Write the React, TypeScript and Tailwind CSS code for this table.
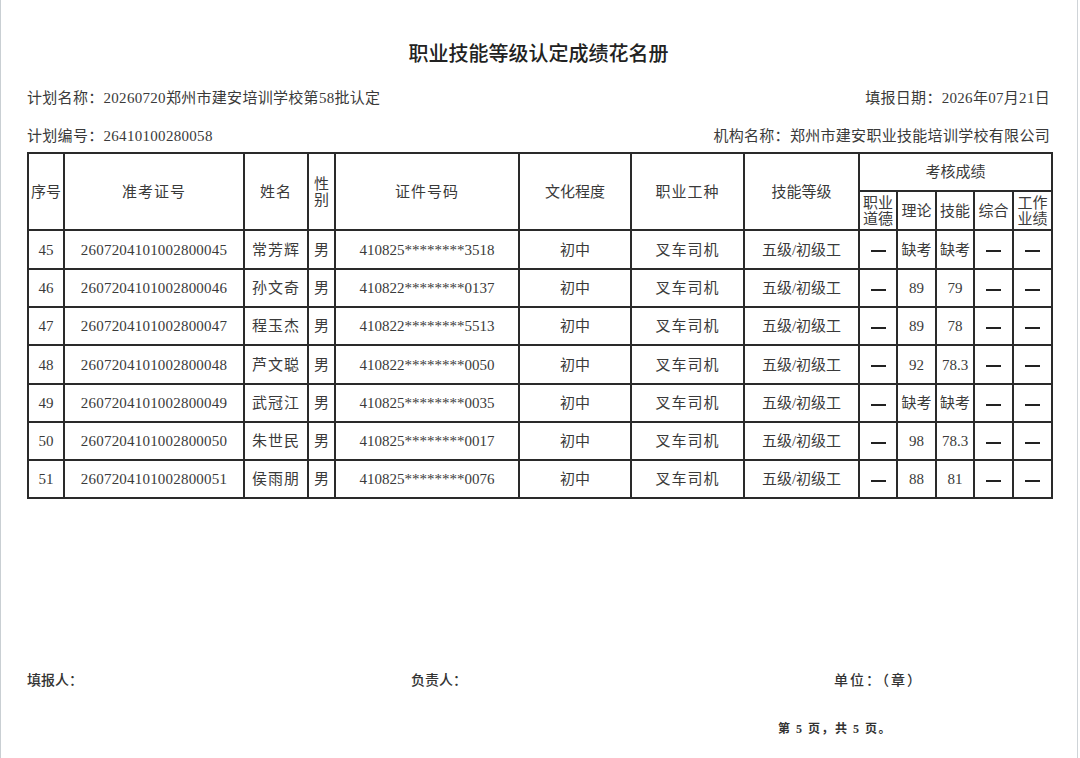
import React from 'react';

type Row = {
  no: string;
  ticket: string;
  name: string;
  sex: string;
  idNo: string;
  edu: string;
  job: string;
  level: string;
  theory: string;
  skill: string;
  h: string;
};

const rows: Row[] = [
  { no: '45', ticket: '2607204101002800045', name: '常芳辉', sex: '男', idNo: '410825********3518', edu: '初中', job: '叉车司机', level: '五级/初级工', theory: '缺考', skill: '缺考', h: 'h-[39px]' },
  { no: '46', ticket: '2607204101002800046', name: '孙文奇', sex: '男', idNo: '410822********0137', edu: '初中', job: '叉车司机', level: '五级/初级工', theory: '89', skill: '79', h: 'h-[38px]' },
  { no: '47', ticket: '2607204101002800047', name: '程玉杰', sex: '男', idNo: '410822********5513', edu: '初中', job: '叉车司机', level: '五级/初级工', theory: '89', skill: '78', h: 'h-[38px]' },
  { no: '48', ticket: '2607204101002800048', name: '芦文聪', sex: '男', idNo: '410822********0050', edu: '初中', job: '叉车司机', level: '五级/初级工', theory: '92', skill: '78.3', h: 'h-[39px]' },
  { no: '49', ticket: '2607204101002800049', name: '武冠江', sex: '男', idNo: '410825********0035', edu: '初中', job: '叉车司机', level: '五级/初级工', theory: '缺考', skill: '缺考', h: 'h-[38px]' },
  { no: '50', ticket: '2607204101002800050', name: '朱世民', sex: '男', idNo: '410825********0017', edu: '初中', job: '叉车司机', level: '五级/初级工', theory: '98', skill: '78.3', h: 'h-[38px]' },
  { no: '51', ticket: '2607204101002800051', name: '侯雨朋', sex: '男', idNo: '410825********0076', edu: '初中', job: '叉车司机', level: '五级/初级工', theory: '88', skill: '81', h: 'h-[38px]' },
];

const cell = 'border-2 border-[#2a2a2a] text-center align-middle p-0';
const head = `${cell} font-normal`;

// empty score: a full-width dash as in the printed form
const Dash: React.FC = () => (
  <span className="inline-block w-[15px] h-[2px] bg-[#222] align-middle"></span>
);

const App: React.FC = () => {
  return (
    <div
      className="w-[1080px] h-[758px] bg-white text-[#3a3a3a] border-l border-[#c9cfd3] relative overflow-hidden"
      style={{ fontFamily: '"Liberation Serif", "Noto Sans CJK SC", serif' }}
    >
      {/* right page edge */}
      <div className="absolute top-0 bottom-0 left-[1076px] w-px bg-[#cfd4d8]"></div>

      <div className="pl-[26px] pr-[30px]">
        <h1
          className="pt-[39px] h-[68px] text-center text-[20px] leading-[28px] font-medium text-[#222]"
          style={{ fontFamily: '"Noto Sans CJK SC", sans-serif' }}
        >
          职业技能等级认定成绩花名册
        </h1>

        <div className="flex justify-between items-center h-[22px] mt-[19px] text-[15px] tracking-[0.3px]">
          <span>计划名称：20260720郑州市建安培训学校第58批认定</span>
          <span>填报日期：2026年07月21日</span>
        </div>

        <div className="flex justify-between items-center h-[22px] mt-[16px] text-[15px] tracking-[0.3px]">
          <span>计划编号：26410100280058</span>
          <span>机构名称：郑州市建安职业技能培训学校有限公司</span>
        </div>

        <table className="table-fixed border-collapse w-[1024px] mt-[5px] text-[15px] leading-[16px]">
          <colgroup>
            <col className="w-[36px]" />
            <col className="w-[180px]" />
            <col className="w-[64px]" />
            <col className="w-[27px]" />
            <col className="w-[184px]" />
            <col className="w-[112px]" />
            <col className="w-[113px]" />
            <col className="w-[115px]" />
            <col className="w-[38px]" />
            <col className="w-[39px]" />
            <col className="w-[38px]" />
            <col className="w-[39px]" />
            <col className="w-[39px]" />
          </colgroup>
          <thead>
            <tr className="h-[38px]">
              <th rowSpan={2} className={head}>序号</th>
              <th rowSpan={2} className={`${head} tracking-[1px]`}>准考证号</th>
              <th rowSpan={2} className={`${head} tracking-[1px]`}>姓名</th>
              <th rowSpan={2} className={head}>性<br />别</th>
              <th rowSpan={2} className={`${head} tracking-[1px]`}>证件号码</th>
              <th rowSpan={2} className={head}>文化程度</th>
              <th rowSpan={2} className={`${head} tracking-[1px]`}>职业工种</th>
              <th rowSpan={2} className={head}>技能等级</th>
              <th colSpan={5} className={head}>考核成绩</th>
            </tr>
            <tr className="h-[39px]">
              <th className={head}>职业<br />道德</th>
              <th className={head}>理论</th>
              <th className={head}>技能</th>
              <th className={head}>综合</th>
              <th className={head}>工作<br />业绩</th>
            </tr>
          </thead>
          <tbody>
            {rows.map((r) => (
              <tr key={r.no} className={r.h}>
                <td className={cell}>{r.no}</td>
                <td className={`${cell} tracking-[0.2px]`}>{r.ticket}</td>
                <td className={`${cell} tracking-[1px]`}>{r.name}</td>
                <td className={cell}>{r.sex}</td>
                <td className={cell}>{r.idNo}</td>
                <td className={cell}>{r.edu}</td>
                <td className={`${cell} tracking-[1px]`}>{r.job}</td>
                <td className={cell}>{r.level}</td>
                <td className={cell}><Dash /></td>
                <td className={cell}>{r.theory}</td>
                <td className={cell}>{r.skill}</td>
                <td className={cell}><Dash /></td>
                <td className={cell}><Dash /></td>
              </tr>
            ))}
          </tbody>
        </table>

        <div className="flex items-center h-[20px] mt-[171px] text-[14px] font-medium text-[#333]">
          <span className="w-[384px]">填报人：</span>
          <span className="w-[423px]">负责人：</span>
          <span className="tracking-[2px]">单位：（章）</span>
        </div>

        <div className="mt-[30px] pl-[751px] text-[12px] font-semibold text-[#333] tracking-[1.5px]">
          第 5 页，共 5 页。
        </div>
      </div>
    </div>
  );
};

export default App;
